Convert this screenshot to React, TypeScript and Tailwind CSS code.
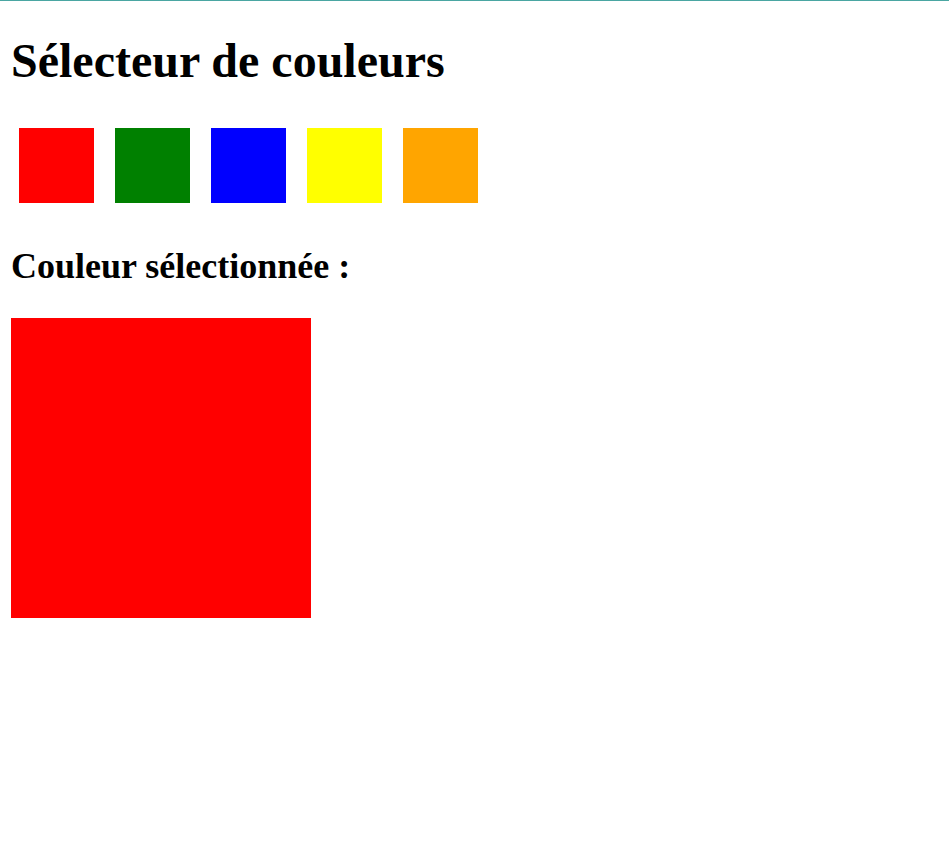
import React, { useState } from "react";

const colors = ["#ff0000", "#008000", "#0000ff", "#ffff00", "#ffa500"];

export default function App() {
  const [selected, setSelected] = useState(colors[0]);
  return (
    <div className="min-h-[853px] bg-white border-t border-[#4aa6a2] text-black" style={{ fontFamily: '"Liberation Serif", "Times New Roman", serif' }}>
      <div className="pl-[11px] flex flex-col items-start">
        <h1 className="mt-[32px] text-[48px] leading-[55px] font-bold">Sélecteur de couleurs</h1>
        <div className="mt-[40px] pl-[8px] flex gap-[21px]">
          {colors.map((c) => (
            <button
              key={c}
              onClick={() => setSelected(c)}
              className="w-[75px] h-[75px] cursor-pointer"
              style={{ backgroundColor: c }}
              aria-label={c}
            />
          ))}
        </div>
        <h2 className="mt-[43px] text-[36px] leading-[41px] font-bold">Couleur sélectionnée :</h2>
        <div className="mt-[31px] w-[300px] h-[300px]" style={{ backgroundColor: selected }} />
      </div>
    </div>
  );
}
